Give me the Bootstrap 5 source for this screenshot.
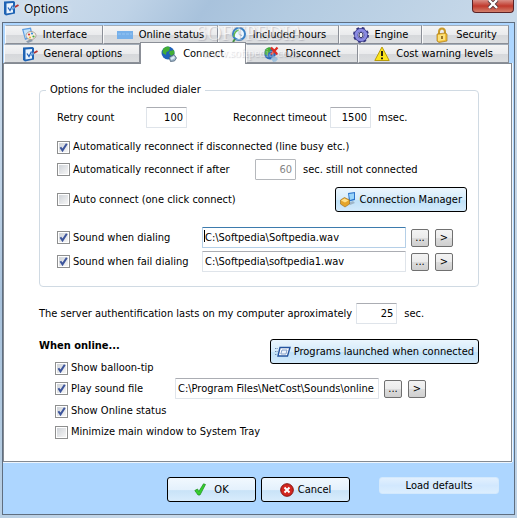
<!DOCTYPE html>
<html lang="en">
<head>
<meta charset="utf-8">
<meta name="viewport" content="width=device-width, initial-scale=1">
<title>Options</title>
<link rel="stylesheet" href="https://cdn.jsdelivr.net/npm/bootstrap@5.3.0/dist/css/bootstrap.min.css">
<style>
  body { font-family: "DejaVu Sans Condensed", "DejaVu Sans", sans-serif; font-size: 11px; line-height: 14px; color: #000; background: #b9cfe6; }
  .win { padding: 0 2px 3px; background: linear-gradient(125deg, #d2e0ee 0, #bfd3e7 15%, #a8c2dc 24%, #b3cbe1 34%, #c9daea 60%, #bdd2e6 100%); }
  .titlebar { height: 22px; padding: 0 0 0 1px; }
  .titlebar h1 { font: 400 12px/18px "Open Sans", sans-serif; margin: 0 0 0 5px; text-shadow: 0 0 6px #fff; }
  .close-btn { width: 42px; height: 13px; margin-right: 1px; border: 1px solid #5b2226; border-top: 0; border-radius: 0 0 4px 4px; background: linear-gradient(#d98f86, #c0392c 50%, #d3806c); }
  .frame { border: 1px solid #5f6e80; background: #add6ff; }
  .tabs { position: relative; padding: 2px 5px 0 1px; }
  .tab-row { display: grid; height: 19px; }
  .tab-row.first { grid-template-columns: 98fr 115fr 121fr 83fr 87fr; margin-left: 1px; }
  .tab-row.second { grid-template-columns: 136fr 106fr 113fr 151fr; }
  .tab-row button { border: 1px solid #8b8f97; border-top-color: #a3adb8; border-left-color: #fafafa; background: linear-gradient(#f4f4f4, #eaebed 50%, #d6d8db 55%, #dcdee0); padding: 0; gap: 6px; min-width: 0; color: #000; white-space: nowrap; height: 19px; }
  .tab-row button.current { height: 22px; margin-top: -2px; background: #fff; border-color: #8b8f97; border-bottom: 0; position: relative; z-index: 1; }
  .watermark { position: absolute; left: 193px; top: 0; font: 20px/20px "Liberation Serif", serif; color: #fff; opacity: .4; z-index: 2; text-align: center; pointer-events: none; text-shadow: 1px 1px 1px #8a8a98; }
  .watermark span { display: block; font-size: 12px; line-height: 20px; }
  .sheet { margin: 0 2px 0 0; border: 1px solid #848a92; background: #fff; padding: 19px 32px 22px 35px; box-shadow: 0 1px #eef5fc, 1px 0 #eef5fc; }
  .dialer { border: 1px solid #d0dae3; border-radius: 4px; padding: 10px 11px 14px 17px; }
  .dialer legend { float: none; width: auto; margin: 0 0 0 -11px; padding: 0 4px; font-size: 11px; line-height: 14px; }
  .field { height: 21px; border: 1px solid #dfe4ea; border-top-color: #abadb3; border-radius: 1px; padding: 0 3px 1px 2px; background: #fff; color: #000; font-size: 11px; min-width: 0; }
  .field.num { width: 41px; text-align: right; flex: none; }
  .field:disabled { border-color: #b5b8bc; color: #858585; }
  .field.active { border-color: #b5cfe7; border-top-color: #3d7bad; }
  .caret-line { position: absolute; left: 2px; top: 3px; width: 1px; height: 12px; background: #000; }
  .tick .form-check-input { width: 13px; height: 13px; margin: 0 3px 0 0; flex: none; border: 1px solid #8e8f8f; border-radius: 0; background: linear-gradient(135deg, #cfd3d8, #f6f6f6) center/9px 9px no-repeat #fff; }
  .tick .form-check-input:checked { background: url("data:image/svg+xml,%3Csvg xmlns='http://www.w3.org/2000/svg' viewBox='0 0 11 11'%3E%3Cpath d='M2.4 5.3 4.5 8.4 8.8 1.8' fill='none' stroke='%233d559c' stroke-width='2'/%3E%3C/svg%3E") center/11px 11px no-repeat, linear-gradient(135deg, #cfd3d8, #f6f6f6) center/9px 9px no-repeat #fff; }
  .tick { height: 14px; min-height: 0; padding: 0; margin: 0; white-space: nowrap; }
  .cmd { height: 25px; border: 1px solid #000; border-radius: 3px; color: #000; font-size: 11px; line-height: 14px; padding: 0 4px; background: linear-gradient(#eaf5fd, #d5ebfa 50%, #bfe1f8 55%, #d3eafb); white-space: nowrap; }
  .cmd.tight { gap: 3px; }
  .cmd.light { width: 89px; background: linear-gradient(#f1f8fe, #e4f1fc 50%, #c9e3f8 55%, #d8ecfc); }
  .cmd.soft { width: 120px; height: 17px; border-color: #d3e9fd; background: linear-gradient(#e2f0fe, #d2e8fe 50%, #dceefe); }
  .mini { width: 18px; height: 18px; border: 1px solid #707070; border-radius: 2px; background: linear-gradient(#f3f3f3, #ebebeb 50%, #dcdcdc 52%, #cfcfcf); color: #000; font-size: 11px; line-height: 14px; padding: 0; flex: none; }
  .lbl-retry { width: 89px; } .lbl-timeout { width: 97px; margin-left: 46px; } .lbl-after { width: 198px; } .lbl-sound { width: 145px; } .lbl-play { width: 120px; }
  .after-num { margin-left: 7px; }
  .gap-btns { gap: 6px; margin-left: 5px; }
  .r3 { margin-top: 3px; } .r5 { margin-top: 5px; } .r7 { margin-top: 7px; } .r12 { margin-top: 12px; } .r15 { margin-top: 15px; }
  .online-list { padding-left: 16px; }
  .sound-row { margin-right: 14px; } .play-row { margin-right: 53px; }
  .heading { font-size: 11px; line-height: 14px; font-weight: 700; margin: 0 0 8px; }
  .actions { padding: 15px 15px 12px; gap: 5px; }
  .actions .cmd.soft { margin-left: 24px; }
</style>
</head>
<body>
<svg class="d-none" aria-hidden="true">
  <symbol id="i-options" viewBox="0 0 16 16">
    <path d="M1 1.500 10.500 1 12 2v11.500L3 15.500 1 14z" fill="#1e63b4"/><path d="M3.500 3.500 10 3v9.500l-6.500 1z" fill="#eaf4fe"/>
    <path d="m5 7.500 2 3 2.500-5" fill="none" stroke="#2263bb" stroke-width="1.300"/><path d="m8.500 9.500 4-3" stroke="#6aa0dc" stroke-width="2"/><path d="m12 7 3.500-2" stroke="#b73330" stroke-width="2"/>
  </symbol>
  <symbol id="i-interface" viewBox="0 0 16 16">
    <path d="m1 2 9-1.500L12 10l-8 3z" fill="#5c9ce0"/><path d="m2.500 3 6.500-1 1.500 7-6 2z" fill="#c4e3fb"/><path d="M5 14.500 10 12l2 2-5 2z" fill="#8a99aa"/>
    <ellipse cx="10" cy="8.500" rx="5" ry="4" fill="#f6efe4" stroke="#9a8b80" stroke-width=".7"/><circle cx="8" cy="7.500" r="1.100" fill="#d9332c"/><circle cx="11" cy="6.500" r="1.100" fill="#3a8fdb"/><circle cx="12.500" cy="9.500" r="1.100" fill="#49aa3d"/><circle cx="9" cy="10.500" r="1" fill="#e8b82b"/>
  </symbol>
  <symbol id="i-globe" viewBox="0 0 16 16">
    <circle cx="7" cy="7" r="6.500" fill="#1f62ba"/><path d="M2 3Q6-1 9 1.500L8 5 5.500 6 5 9 1.500 7zM9 5l4-1 .5 4L10 10 8 7z" fill="#42ae35"/>
    <path d="m8 11.500 5-3 2.500 3.500-2 3-4 .5z" fill="#9db5ca" stroke="#40586f" stroke-width=".7"/><path d="m9.500 12 3.500-2 1 2-3.500 2z" fill="#dcecf8"/>
  </symbol>
  <symbol id="i-offline" viewBox="0 0 16 16">
    <circle cx="7" cy="7.500" r="6" fill="#2668bd"/><path d="M2 4Q5 0 8 2L7 6 5 7 4.500 10 1.500 8z" fill="#42ae35"/><path d="m8 12 4-2 3 3-2 2.500-3 .5z" fill="#9fc1dd"/>
    <path d="m8 1.500 6.500 7M14.500 1.500 8 8.500" stroke="#e02b20" stroke-width="2.200"/>
  </symbol>
  <symbol id="i-hours" viewBox="0 0 16 16">
    <circle cx="8" cy="7" r="6" fill="#eef8ff" stroke="#3a81c5" stroke-width="2"/><path d="M3 10q0-6 5-7" fill="none" stroke="#66b94d" stroke-width="1.500"/><path d="M8 4v3.500l3 1" fill="none" stroke="#8fb0cc"/><path d="m4 12-2 3" stroke="#478f43" stroke-width="2"/>
  </symbol>
  <symbol id="i-gear" viewBox="0 0 16 16">
    <circle cx="8" cy="8" r="6.500" fill="none" stroke="#35357c" stroke-width="3" stroke-dasharray="2.600 2.500"/><circle cx="8" cy="8" r="4.900" fill="none" stroke="#383889" stroke-width="4"/><circle cx="8" cy="8" r="4.800" fill="none" stroke="#8b8be2" stroke-width="2.900"/><ellipse cx="8" cy="8" rx="2" ry="2.800" fill="#eee" stroke="#30306c"/>
  </symbol>
  <symbol id="i-lock" viewBox="0 0 16 16">
    <path d="M5 8V5q0-3.500 3-3.500T11 5v2" fill="none" stroke="#c99a29" stroke-width="2"/><path d="m3 7 8-1 2 1v7l-8 1.500L3 14z" fill="#f2bf37" stroke="#a8781a" stroke-width=".7"/><path d="m4 8 7-1v6l-7 1z" fill="#fbe17d"/><path d="M8 9v3" stroke="#79520c" stroke-width="1.500"/>
  </symbol>
  <symbol id="i-warn" viewBox="0 0 16 16">
    <path d="M8 1 15.200 14.500H.8z" fill="#fbe51c" stroke="#b99b09" stroke-linejoin="round"/><path d="M8 5v5M8 11.500v1.800" stroke="#111" stroke-width="1.800"/>
  </symbol>
  <symbol id="i-manager" viewBox="0 0 16 16">
    <path d="m8 1 7-1v8l-6 1.500z" fill="#2c75cb"/><path d="m9 2 5-.8v5.500L10 8z" fill="#99d5fb"/><path d="m8 11 5-2 2 2-5 2z" fill="#9fb6c8"/>
    <path d="m.5 8 4-2.500 5 2.500v4L5 15 .5 12z" fill="#e5a52a" stroke="#9b6a18" stroke-width=".6"/><path d="m1 8.500 3.500-2 4 2L5 10.500z" fill="#ffe08a"/>
  </symbol>
  <symbol id="i-launch" viewBox="0 0 16 12">
    <path d="M5 1.500h10L12.500 10H3z" fill="#fff" stroke="#24549f" stroke-width="1.400"/><path d="M7 4h5l-1 4H5.800z" fill="#eef5fd" stroke="#7797c4" stroke-width=".9"/><path d="M0 2.500h3M0 5.500h2.500M0 8.500h2" stroke="#6b87ad" stroke-dasharray="1 .6"/>
  </symbol>
</svg>

<main class="win min-vh-100 d-flex flex-column">
  <header class="titlebar d-flex align-items-start">
    <svg width="16" height="16"><use href="#i-options"/></svg>
    <h1>Options</h1>
    <button type="button" class="close-btn ms-auto p-0 d-flex justify-content-center" aria-label="Close">
      <svg width="12" height="9" viewBox="0 0 12 9"><path d="m2 0 8 8M10 0 2 8" stroke="#54383d" stroke-width="4"/><path d="m2 0 8 8M10 0 2 8" stroke="#fff" stroke-width="2.400"/></svg>
    </button>
  </header>

  <div class="frame flex-grow-1 d-flex flex-column">
    <div class="tabs" role="tablist">
      <div class="tab-row first">
        <button type="button" role="tab" class="d-flex align-items-center justify-content-center"><svg width="16" height="16"><use href="#i-interface"/></svg>Interface</button>
        <button type="button" role="tab" class="d-flex align-items-center justify-content-center"><svg width="16" height="8"><path d="M0 0h16v8H0z" fill="#76b0ea"/><path d="M1 3h14" stroke="#97c6f3" stroke-dasharray="3 1"/></svg>Online status</button>
        <button type="button" role="tab" class="d-flex align-items-center justify-content-center"><svg width="16" height="16"><use href="#i-hours"/></svg>Included hours</button>
        <button type="button" role="tab" class="d-flex align-items-center justify-content-center"><svg width="16" height="16"><use href="#i-gear"/></svg>Engine</button>
        <button type="button" role="tab" class="d-flex align-items-center justify-content-center"><svg width="16" height="16"><use href="#i-lock"/></svg>Security</button>
      </div>
      <div class="tab-row second">
        <button type="button" role="tab" class="d-flex align-items-center justify-content-center"><svg width="16" height="16"><use href="#i-options"/></svg>General options</button>
        <button type="button" role="tab" aria-selected="true" class="current d-flex align-items-center justify-content-center"><svg width="16" height="16"><use href="#i-globe"/></svg>Connect</button>
        <button type="button" role="tab" class="d-flex align-items-center justify-content-center"><svg width="16" height="16"><use href="#i-offline"/></svg>Disconnect</button>
        <button type="button" role="tab" class="d-flex align-items-center justify-content-center"><svg width="16" height="16"><use href="#i-warn"/></svg>Cost warning levels</button>
      </div>
      <div class="watermark">SOFTPEDIA<span>www.softpedia.com</span></div>
    </div>

    <form class="d-flex flex-column flex-grow-1">
      <section class="sheet flex-grow-1">
        <fieldset class="dialer">
          <legend>Options for the included dialer</legend>
          <div class="d-flex align-items-center">
            <label class="lbl-retry" for="retry">Retry count</label>
            <input class="field num" id="retry" value="100">
            <label class="lbl-timeout" for="timeout">Reconnect timeout</label>
            <input class="field num" id="timeout" value="1500">
            <span class="after-num">msec.</span>
          </div>
          <div class="form-check tick d-flex align-items-center r12">
            <input class="form-check-input" type="checkbox" id="c1" checked><label for="c1">Automatically reconnect if disconnected (line busy etc.)</label>
          </div>
          <div class="d-flex align-items-center r5">
            <div class="form-check tick d-flex align-items-center lbl-after"><input class="form-check-input" type="checkbox" id="c2"><label for="c2">Automatically reconnect if after</label></div>
            <input class="field num" value="60" aria-label="Seconds" disabled>
            <span class="after-num">sec. still not connected</span>
          </div>
          <div class="d-flex align-items-center justify-content-between r7">
            <div class="form-check tick d-flex align-items-center"><input class="form-check-input" type="checkbox" id="c3"><label for="c3">Auto connect (one click connect)</label></div>
            <button type="button" class="cmd tight d-flex align-items-center"><svg width="16" height="16"><use href="#i-manager"/></svg>Connection Manager</button>
          </div>
          <div class="d-flex align-items-center r15 sound-row">
            <div class="form-check tick d-flex align-items-center lbl-sound"><input class="form-check-input" type="checkbox" id="c4" checked><label for="c4">Sound when dialing</label></div>
            <div class="position-relative flex-grow-1 d-flex"><input class="field active w-100" value="C:\Softpedia\Softpedia.wav" aria-label="Dialing sound"><span class="caret-line"></span></div>
            <div class="d-flex gap-btns"><button type="button" class="mini">...</button><button type="button" class="mini">&gt;</button></div>
          </div>
          <div class="d-flex align-items-center r3 sound-row">
            <div class="form-check tick d-flex align-items-center lbl-sound"><input class="form-check-input" type="checkbox" id="c5" checked><label for="c5">Sound when fail dialing</label></div>
            <div class="flex-grow-1 d-flex"><input class="field w-100" value="C:\Softpedia\softpedia1.wav" aria-label="Fail dialing sound"></div>
            <div class="d-flex gap-btns"><button type="button" class="mini">...</button><button type="button" class="mini">&gt;</button></div>
          </div>
        </fieldset>

        <div class="d-flex align-items-center mt-3">
          <label for="auth" class="text-nowrap me-1">The server authentification lasts on my computer aproximately</label>
          <input class="field num" id="auth" value="25">
          <span class="after-num">sec.</span>
        </div>

        <div class="d-flex align-items-start justify-content-between r15">
          <div>
            <h2 class="heading">When online...</h2>
            <div class="online-list"><div class="form-check tick d-flex align-items-center"><input class="form-check-input" type="checkbox" id="c6" checked><label for="c6">Show balloon-tip</label></div></div>
          </div>
          <button type="button" class="cmd tight d-flex align-items-center"><svg width="16" height="12"><use href="#i-launch"/></svg>Programs launched when connected</button>
        </div>
        <div class="online-list">
          <div class="d-flex align-items-center r3 play-row">
            <div class="form-check tick d-flex align-items-center lbl-play"><input class="form-check-input" type="checkbox" id="c7" checked><label for="c7">Play sound file</label></div>
            <div class="flex-grow-1 d-flex"><input class="field w-100" value="C:\Program Files\NetCost\Sounds\online.wav" aria-label="Online sound"></div>
            <div class="d-flex gap-btns"><button type="button" class="mini">...</button><button type="button" class="mini">&gt;</button></div>
          </div>
          <div class="form-check tick d-flex align-items-center r5"><input class="form-check-input" type="checkbox" id="c8" checked><label for="c8">Show Online status</label></div>
          <div class="form-check tick d-flex align-items-center r7"><input class="form-check-input" type="checkbox" id="c9"><label for="c9">Minimize main window to System Tray</label></div>
        </div>
      </section>

      <footer class="actions d-flex justify-content-end align-items-start">
        <button type="button" class="cmd light d-flex align-items-center justify-content-center gap-2"><svg width="12" height="13" viewBox="0 0 12 13"><path d="M.8 7.500 3.500 6l1.300 2.500L9.500.8l2 .7L6 12H4z" fill="#35cf2e" stroke="#1c8c1c" stroke-width=".7"/></svg>OK</button>
        <button type="button" class="cmd light d-flex align-items-center justify-content-center gap-1"><svg width="14" height="14" viewBox="0 0 14 14"><circle cx="7" cy="7" r="6.300" fill="#d3261f" stroke="#85130f"/><path d="m4.500 4.500 5 5m0-5-5 5" stroke="#fff" stroke-width="2"/></svg>Cancel</button>
        <button type="button" class="cmd soft">Load defaults</button>
      </footer>
    </form>
  </div>
</main>
<script src="https://cdn.jsdelivr.net/npm/bootstrap@5.3.0/dist/js/bootstrap.bundle.min.js"></script>
</body>
</html>
